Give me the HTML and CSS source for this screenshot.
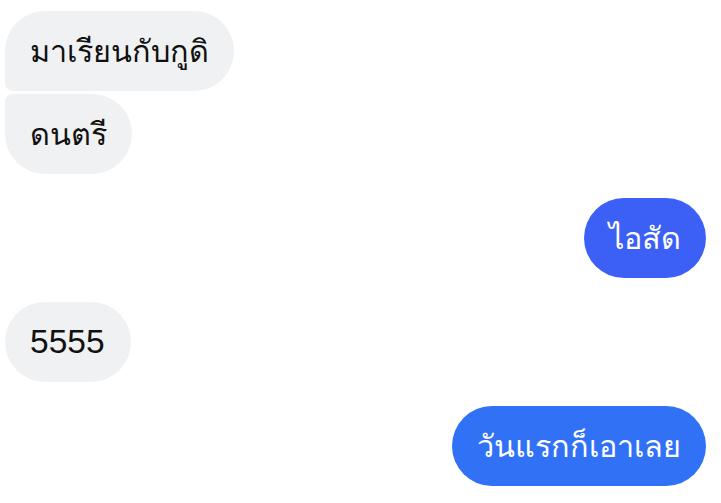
FILE: index.html
```html
<!DOCTYPE html>
<html lang="th">
<head>
<meta charset="utf-8">
<link rel="stylesheet" href="styles.css">
</head>
<body>
<div class="chat">
  <div class="group">
    <div class="msg in first th">มาเรียนกับกูดิ</div>
    <div class="msg in last th">ดนตรี</div>
  </div>
  <div class="msg out out-a th">ไอสัด</div>
  <div class="msg in num">5555</div>
  <div class="msg out out-b th">วันแรกก็เอาเลย</div>
</div>
</body>
</html>
```
FILE: styles.css
```css
html, body {
  margin: 0;
  background: #ffffff;
}
.chat {
  display: flex;
  flex-direction: column;
  gap: 24px;
  padding: 11px 15px 0 5px;
  font-family: "Liberation Sans", "Noto Sans", sans-serif;
}
.group {
  display: flex;
  flex-direction: column;
  gap: 3px;
  align-items: flex-start;
}
.msg {
  box-sizing: border-box;
  height: 80px;
  padding: 0 25px;
  display: flex;
  align-items: center;
  border-radius: 40px;
  white-space: nowrap;
}
.th {
  font-size: 30.6px;
}
.num {
  font-size: 33.5px;
  padding: 0 26px 0 25px;
}
.in {
  align-self: flex-start;
  background: #f0f1f3;
  color: #111111;
}
.in.first {
  border-bottom-left-radius: 8px;
}
.in.last {
  border-top-left-radius: 8px;
}
.out {
  align-self: flex-end;
  color: #ffffff;
}
.out-a {
  background: #3c60f6;
}
.out-b {
  background: #3171f6;
}
```
